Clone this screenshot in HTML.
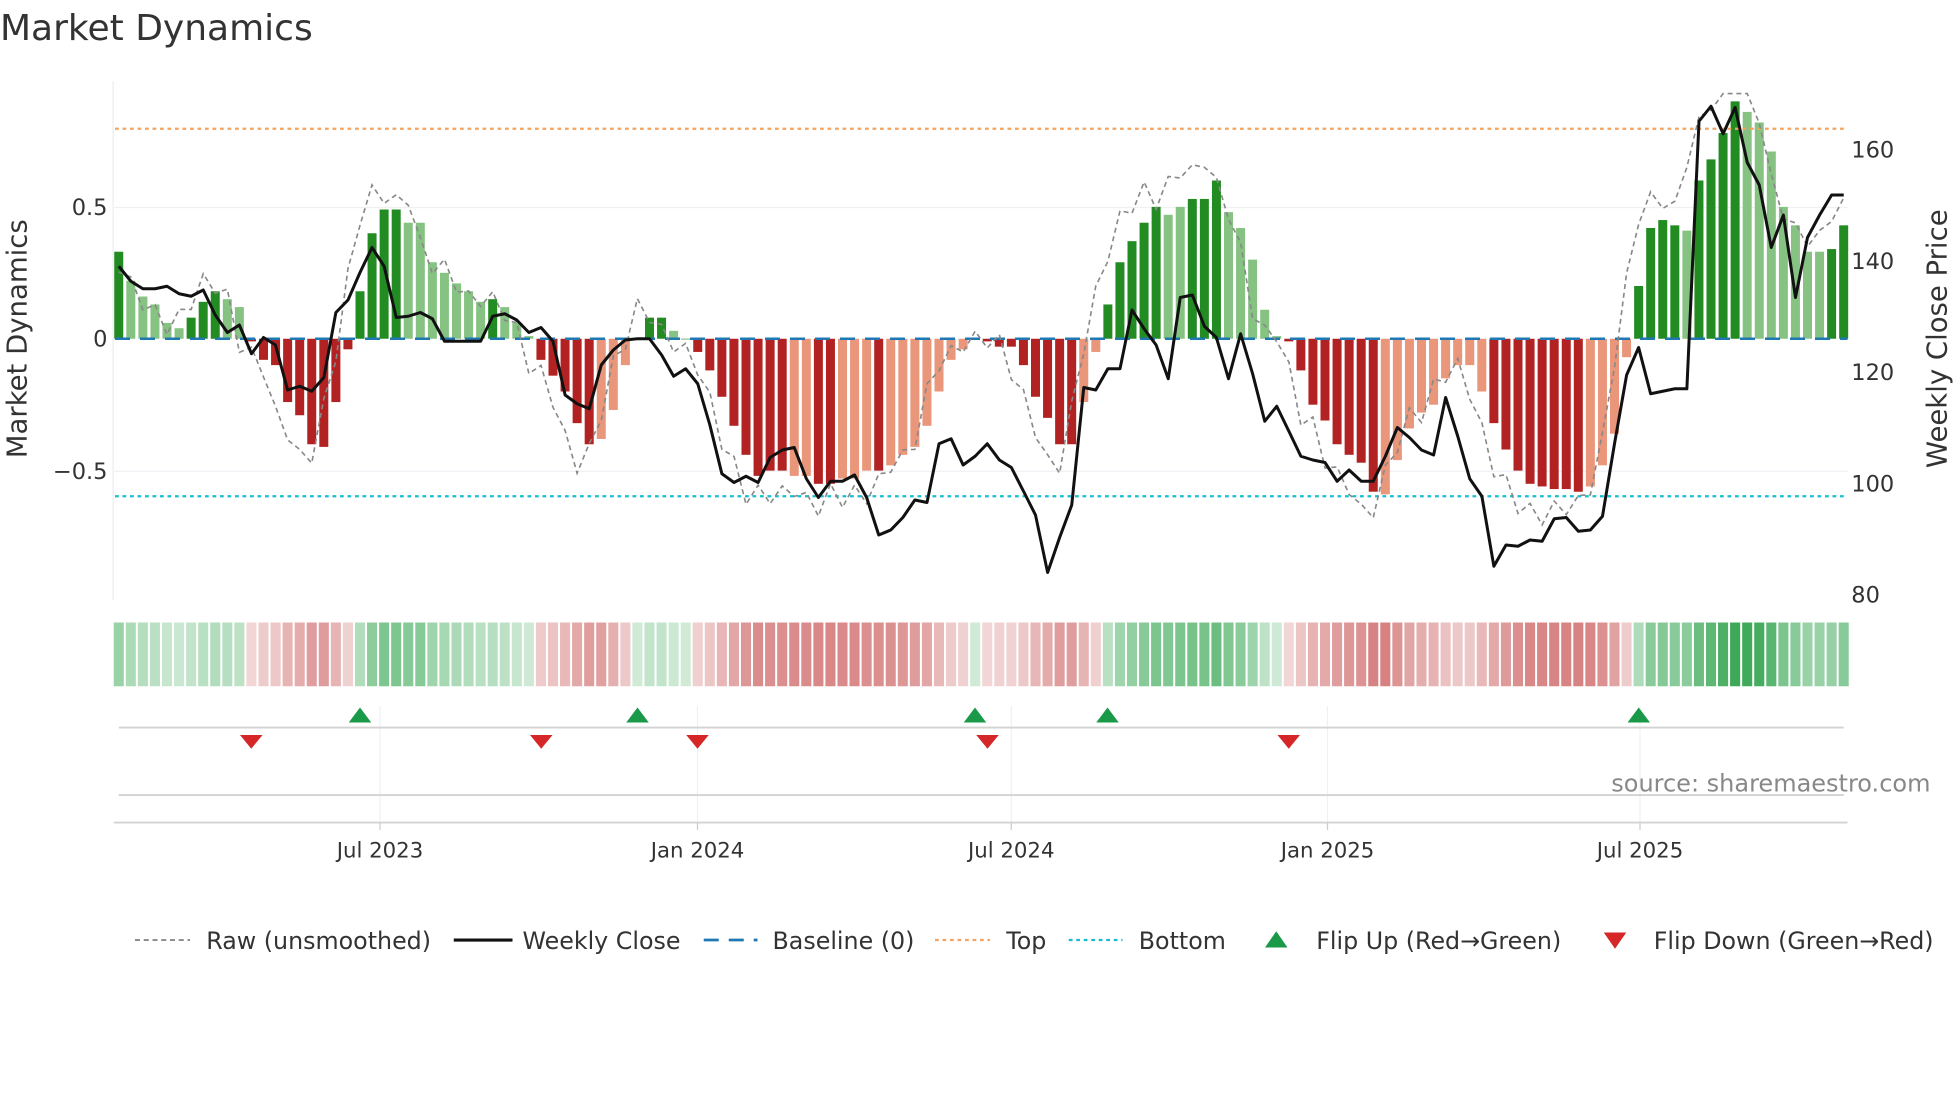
<!DOCTYPE html>
<html><head><meta charset="utf-8"><style>
html,body{margin:0;padding:0;background:#fff;width:1960px;height:1102px;overflow:hidden}
svg{display:block}
text{font-family:"DejaVu Sans","Liberation Sans",sans-serif}
</style></head><body>
<svg id="s" width="1960" height="1102" viewBox="0 0 1568 881.6" xmlns="http://www.w3.org/2000/svg">
<text x="0" y="32" font-size="28.8" fill="#333">Market Dynamics</text>
<line x1="90.5" y1="65" x2="90.5" y2="480" stroke="#eee" stroke-width="1"/>
<line x1="90" y1="166" x2="1478" y2="166" stroke="#eef0f4" stroke-width="1"/>
<line x1="90" y1="377" x2="1478" y2="377" stroke="#eef0f4" stroke-width="1"/>
<g id="bars"></g>
<line x1="92" y1="271" x2="1478" y2="271" stroke="#1f77b4" stroke-width="2" stroke-dasharray="12,8"/>
<line x1="92" y1="103" x2="1478" y2="103" stroke="#f4a460" stroke-width="1.8" stroke-dasharray="3,3"/>
<line x1="92" y1="397" x2="1478" y2="397" stroke="#17becf" stroke-width="1.8" stroke-dasharray="3,3"/>
<polyline id="raw" fill="none" stroke="#888" stroke-width="1.3" stroke-dasharray="4,3"/>
<polyline id="close" fill="none" stroke="#111" stroke-width="2.4" stroke-linejoin="round"/>
<g font-size="18" fill="#333">
<text x="86" y="172" text-anchor="end">0.5</text>
<text x="86" y="277" text-anchor="end">0</text>
<text x="86" y="383" text-anchor="end">−0.5</text>
<text x="1481" y="126">160</text>
<text x="1481" y="215">140</text>
<text x="1481" y="304">120</text>
<text x="1481" y="393">100</text>
<text x="1481" y="482">80</text>
</g>
<text transform="translate(21,271) rotate(-90)" font-size="22" fill="#333" text-anchor="middle">Market Dynamics</text>
<text transform="translate(1557,271) rotate(-90)" font-size="22" fill="#333" text-anchor="middle">Weekly Close Price</text>
<g id="strip"></g>
<g stroke="#eef0f4" stroke-width="1">
<line x1="304" y1="565" x2="304" y2="660"/><line x1="558" y1="565" x2="558" y2="660"/><line x1="809" y1="565" x2="809" y2="660"/><line x1="1062" y1="565" x2="1062" y2="660"/><line x1="1312" y1="565" x2="1312" y2="660"/>
</g>
<line x1="95" y1="582" x2="1475" y2="582" stroke="#d3d3d3" stroke-width="1.5"/>
<line x1="95" y1="636" x2="1475" y2="636" stroke="#d3d3d3" stroke-width="1.5"/>
<line x1="91" y1="658" x2="1478" y2="658" stroke="#d3d3d3" stroke-width="1.5"/>
<g stroke="#ccc"><line x1="304" y1="658" x2="304" y2="664"/><line x1="558" y1="658" x2="558" y2="664"/><line x1="809" y1="658" x2="809" y2="664"/><line x1="1062" y1="658" x2="1062" y2="664"/><line x1="1312" y1="658" x2="1312" y2="664"/></g>
<g id="marks"></g>
<text x="1289" y="633" font-size="19.2" fill="#888">source: sharemaestro.com</text>
<g font-size="17" fill="#333" text-anchor="middle">
<text x="304" y="686">Jul 2023</text><text x="558" y="686">Jan 2024</text><text x="809" y="686">Jul 2024</text><text x="1062" y="686">Jan 2025</text><text x="1312" y="686">Jul 2025</text>
</g>
<g font-size="19" fill="#333">
<line x1="108" y1="752" x2="152" y2="752" stroke="#888" stroke-width="1.5" stroke-dasharray="4,3"/>
<text x="165" y="759">Raw (unsmoothed)</text>
<line x1="363" y1="752" x2="410" y2="752" stroke="#111" stroke-width="2.5"/>
<text x="418" y="759">Weekly Close</text>
<line x1="563" y1="752" x2="606" y2="752" stroke="#1f77b4" stroke-width="2.2" stroke-dasharray="12,8"/>
<text x="618" y="759">Baseline (0)</text>
<line x1="748" y1="752" x2="792" y2="752" stroke="#f4a460" stroke-width="1.8" stroke-dasharray="3,3"/>
<text x="805" y="759">Top</text>
<line x1="855" y1="752" x2="898" y2="752" stroke="#17becf" stroke-width="1.8" stroke-dasharray="3,3"/>
<text x="911" y="759">Bottom</text>
<polygon points="1012,758 1021,745 1030,758" fill="#1a9a48"/>
<text x="1053" y="759">Flip Up (Red→Green)</text>
<polygon points="1283,746 1301,746 1292,759" fill="#d62728"/>
<text x="1323" y="759">Flip Down (Green→Red)</text>
</g>
</svg>
<script>
var v=[.33,-.22,-.16,-.13,-.06,-.04,.08,.14,.18,-.15,-.12,-.01,-.08,-.1,-.24,-.29,-.4,-.41,-.24,-.04,.18,.4,.49,.49,-.44,-.44,-.29,-.25,-.21,-.18,-.14,.15,-.12,-.06,-.01,-.08,-.14,-.2,-.32,-.4,-.38,-.27,-.1,0,.08,.08,-.03,0,-.05,-.12,-.22,-.33,-.44,-.52,-.5,-.5,-.52,-.52,-.55,-.55,-.53,-.53,-.5,-.5,-.48,-.44,-.41,-.33,-.2,-.08,-.04,0,-.01,-.03,-.03,-.1,-.22,-.3,-.4,-.4,-.24,-.05,.13,.29,.37,.44,.5,-.47,-.5,.53,.53,.6,-.48,-.42,-.3,-.11,-.01,-.01,-.12,-.25,-.31,-.4,-.44,-.47,-.58,-.59,-.46,-.34,-.28,-.25,-.15,-.1,-.1,-.2,-.32,-.42,-.5,-.55,-.56,-.57,-.57,-.58,-.56,-.48,-.36,-.07,.2,.42,.45,.43,-.41,.6,.68,.78,.9,-.86,-.82,-.71,-.5,-.43,-.33,-.33,.34,.43];
var light=[],val=[],i;
var L=[1,2,3,4,5,9,10,24,25,26,27,28,29,30,32,33,34,40,41,42,46,56,57,60,61,62,64,65,66,67,68,69,70,80,81,87,88,92,93,94,95,96,105,106,107,108,109,110,111,112,113,122,123,124,125,130,135,136,137,138,139,140,141];
var pos=[0,1,2,3,4,5,6,7,8,9,10,20,21,22,23,24,25,26,27,28,29,30,31,32,33,34,44,45,46,82,83,84,85,86,87,88,89,90,91,92,93,94,95,96,126,127,128,129,130,131,132,133,134,135,136,137,138,139,140,141,142,143];
for(i=0;i<v.length;i++){var a=Math.abs(v[i]);val[i]=pos.indexOf(i)>=0?a:-a;light[i]=L.indexOf(i)>=0;}
var NS="http://www.w3.org/2000/svg";
function el(t,at,p){var e=document.createElementNS(NS,t);for(var k in at)e.setAttribute(k,at[k]);document.getElementById(p).appendChild(e);return e;}
var x0=95,dx=9.65,bw=7.2;
for(i=0;i<val.length;i++){
 var x=x0+i*dx,h=val[i]*211,c;
 if(val[i]>=0)c=light[i]?"#86c383":"#228b22";else c=light[i]?"#e9967a":"#b22222";
 el("rect",{x:x-bw/2,y:h>=0?271-h:271,width:bw,height:Math.max(Math.abs(h),0.5),fill:c},"bars");
 var a=Math.min(0.9,0.22+0.7*Math.abs(val[i])/0.9);
 var sc=val[i]>=0?"rgba(40,160,70,"+a+")":"rgba(196,70,70,"+a+")";
 el("rect",{x:x-dx/2+0.8,y:498,width:dx-1.6,height:51,fill:sc},"strip");
}
var cy=[213,225,231,231,229,235,237,232,252,266,260,283,270,276,312,309,313,302,250,240,218,198,213,254,253,250,255,273,273,273,273,253,251,256,266,262,273,316,323,327,292,280,272,271,271,284,301,295,307,340,379,386,381,386,366,360,358,383,398,385,385,380,398,428,424,414,400,402,355,351,372,365,355,368,374,393,412,458,430,404,310,312,295,295,248,263,276,303,238,236,261,270,303,267,299,337,325,345,365,368,370,385,376,385,385,365,342,350,360,364,318,349,383,397,453,436,437,432,433,415,414,425,424,413,355,300,278,315,313,311,311,97,85,107,86,130,148,198,172,238,190,172,156,156];
var p=[];for(i=0;i<cy.length;i++)p.push((x0+i*dx).toFixed(1)+","+cy[i]);
document.getElementById("close").setAttribute("points",p.join(" "));
var q=[],noise=[0,.05,-.04,.06,-.03,.02,-.05,.04];
for(i=0;i<val.length;i++){var n=val[Math.min(i+1,val.length-1)]*1.15+noise[i%8];if(n>0.93)n=0.93;q.push((x0+i*dx).toFixed(1)+","+(271-n*211).toFixed(1));}
document.getElementById("raw").setAttribute("points",q.join(" "));
[288,510,780,886,1311].forEach(function(x){el("polygon",{points:(x-9)+",578 "+x+",566 "+(x+9)+",578",fill:"#1a9a48"},"marks");});
[201,433,558,790,1031].forEach(function(x){el("polygon",{points:(x-9)+",588 "+(x+9)+",588 "+x+",599",fill:"#d62728"},"marks");});
</script>
</body></html>
